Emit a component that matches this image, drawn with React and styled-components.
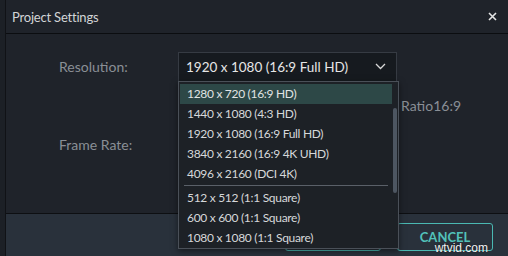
import React from 'react';
import styled, { createGlobalStyle } from 'styled-components';

const GlobalStyle = createGlobalStyle`
  html, body {
    margin: 0;
    padding: 0;
    background: #1f232a;
  }
  body {
    font-family: Lato, "Open Sans", sans-serif;
  }
`;

const resolutions = [
  '1280 x 720 (16:9 HD)',
  '1440 x 1080 (4:3 HD)',
  '1920 x 1080 (16:9 Full HD)',
  '3840 x 2160 (16:9 4K UHD)',
  '4096 x 2160 (DCI 4K)',
];

const squares = [
  '512 x 512 (1:1 Square)',
  '600 x 600 (1:1 Square)',
  '1080 x 1080 (1:1 Square)',
];

const App = () => {
  return (
    <Screen>
      <GlobalStyle />
      <Edge />
      <Dialog>
        <Header>
          <Title>Project Settings</Title>
          <Close>
            <svg width="9" height="9" viewBox="0 0 9 9">
              <path d="M1 1 L8 8 M8 1 L1 8" stroke="#e4e4e4" strokeWidth="1.6" />
            </svg>
          </Close>
        </Header>

        <Body>
          <Row>
            <Label>Resolution:</Label>
            <SelectWrap>
              <Select>
                <span>1920 x 1080 (16:9 Full HD)</span>
                <svg width="11" height="7" viewBox="0 0 11 7">
                  <path d="M1 1 L5.5 5.5 L10 1" fill="none" stroke="#d8d8d8" strokeWidth="1.3" />
                </svg>
              </Select>
              <Menu>
                {resolutions.map((r, i) => (
                  <Item key={r} $active={i === 0}>{r}</Item>
                ))}
                <Divider />
                {squares.map((r) => (
                  <Item key={r}>{r}</Item>
                ))}
                <Scroll />
              </Menu>
            </SelectWrap>
          </Row>
          <InfoRow>
            <Info>Aspect Ratio16:9</Info>
          </InfoRow>
          <Row>
            <Label>Frame Rate:</Label>
          </Row>
        </Body>

        <Footer>
          <Button />
          <Button>CANCEL</Button>
        </Footer>
      </Dialog>
      <Watermark>wtvid.com</Watermark>
    </Screen>
  );
};

const Screen = styled.div`
  position: relative;
  display: flex;
  width: 508px;
  height: 256px;
  overflow: hidden;
  background: #1f232a;
`;

const Edge = styled.div`
  width: 5px;
  flex-shrink: 0;
  background: #1c2026;
  border-right: 1px solid #101216;
`;

const Dialog = styled.div`
  flex: 1;
  display: flex;
  flex-direction: column;
`;

const Header = styled.div`
  height: 34px;
  display: flex;
  align-items: center;
  justify-content: space-between;
  padding: 0 11px 0 6px;
  border-bottom: 1px solid #0b0d10;
  box-sizing: border-box;
`;

const Title = styled.div`
  font-size: 13px;
  color: #d2d4d6;
  letter-spacing: -0.2px;
`;

const Close = styled.div`
  display: flex;
  align-items: center;
`;

const Body = styled.div`
  flex: 1;
  display: flex;
  flex-direction: column;
  padding: 17px 0 0 53px;
  box-sizing: border-box;
`;

const Row = styled.div`
  display: flex;
  align-items: center;
  height: 31px;
`;

const InfoRow = styled.div`
  height: 47px;
  display: flex;
  align-items: center;
  padding-left: 296px;
`;

const Label = styled.div`
  width: 119px;
  font-size: 14px;
  color: #8a8f96;
`;

const Info = styled.div`
  font-size: 14px;
  color: #8a8f96;
`;

const SelectWrap = styled.div`
  position: relative;
  z-index: 2;
`;

const Select = styled.div`
  width: 219px;
  height: 30px;
  box-sizing: border-box;
  display: flex;
  align-items: center;
  justify-content: space-between;
  padding: 0 10px 0 7px;
  background: #161a1f;
  border: 1px solid #363b43;
  font-size: 13.5px;
  color: #e6e6e6;
`;

const Menu = styled.div`
  position: absolute;
  top: 29px;
  left: 0;
  width: 221px;
  box-sizing: border-box;
  padding: 2px 6px 0 1px;
  background: #1d2126;
  border: 1px solid #4a5058;
  box-shadow: 0 2px 6px rgba(0, 0, 0, 0.5);
`;

const Item = styled.div`
  height: 20px;
  line-height: 20px;
  padding-left: 7px;
  font-size: 12px;
  letter-spacing: -0.3px;
  color: ${(p) => (p.$active ? '#e0e4e4' : '#d6d8da')};
  background: ${(p) => (p.$active ? '#2d4847' : 'transparent')};
`;

const Divider = styled.div`
  height: 1px;
  margin: 1px 4px 2px 4px;
  background: #5a6068;
`;

const Scroll = styled.div`
  position: absolute;
  right: 1px;
  top: 26px;
  width: 4px;
  height: 85px;
  border-radius: 2px;
  background: #4d5661;
`;

const Footer = styled.div`
  height: 43px;
  display: flex;
  align-items: flex-start;
  justify-content: flex-end;
  gap: 16px;
  padding: 9px 15px 0 0;
  box-sizing: border-box;
  background: #29313b;
  border-top: 1px solid #0d0f12;
`;

const Button = styled.div`
  width: 96px;
  height: 28px;
  box-sizing: border-box;
  display: flex;
  align-items: center;
  justify-content: center;
  border: 1px solid #4ab8b2;
  border-radius: 3px;
  font-size: 13px;
  font-weight: 700;
  color: #52c2ba;
`;

const Watermark = styled.div`
  position: absolute;
  right: 20px;
  bottom: 1px;
  font-family: "Liberation Sans", Arial, sans-serif;
  font-size: 12px;
  color: #f2f2f2;
  text-shadow: 0 0 2px rgba(0, 0, 0, 0.6);
`;

export default App;
